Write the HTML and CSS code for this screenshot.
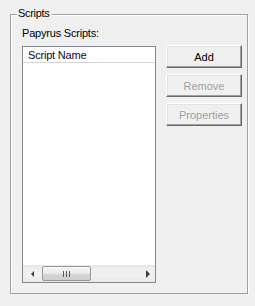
FILE: index.html
```html
<!DOCTYPE html>
<html lang="en">
<head>
    <meta charset="UTF-8">
    <title>Scripts</title>
    <link rel="stylesheet" href="styles.css">
</head>
<body>
    <div class="group">
        <span class="group-title">Scripts</span>
        <div class="left">
            <div class="label">Papyrus Scripts:</div>
            <div class="listbox">
                <div class="list-header">Script Name</div>
                <div class="list-body"></div>
                <div class="hscroll">
                    <div class="arrow"><span class="tri-left"></span></div>
                    <div class="track">
                        <div class="thumb"><span class="grip"></span></div>
                    </div>
                    <div class="arrow"><span class="tri-right"></span></div>
                </div>
            </div>
        </div>
        <div class="buttons">
            <button class="btn">Add</button>
            <button class="btn" disabled>Remove</button>
            <button class="btn" disabled>Properties</button>
        </div>
    </div>
</body>
</html>
```

FILE: styles.css
```css
body {
    margin: 0;
    background: #f0f0f0;
    font-family: "Liberation Sans", Arial, sans-serif;
    font-size: 11px;
    line-height: 13px;
    color: #000;
}
.group {
    position: relative;
    display: flex;
    box-sizing: border-box;
    margin: 14px 0 0 10px;
    width: 238px;
    height: 280px;
    padding: 12px 0 0 11px;
    border: 1px solid #a0a0a0;
    box-shadow: 1px 1px 0 #fff, inset 1px 1px 0 #fff;
}
.group-title {
    position: absolute;
    top: -8px;
    left: 6px;
    padding: 0 2px 0 1px;
    background: #f0f0f0;
    letter-spacing: -0.3px;
}
.left {
    display: flex;
    flex-direction: column;
}
.label {
    margin-bottom: 6px;
    letter-spacing: -0.2px;
}
.listbox {
    display: flex;
    flex-direction: column;
    box-sizing: border-box;
    width: 134px;
    height: 237px;
    border: 1px solid #828790;
    background: #fff;
}
.list-header {
    padding: 2px 0 0 5px;
    height: 13px;
    border-bottom: 1px solid #d5d5d5;
    letter-spacing: -0.2px;
    color: #0a0a28;
}
.list-body {
    flex: 1;
}
.hscroll {
    display: flex;
    height: 17px;
    background: linear-gradient(#e6e6e6, #f0f0f0 30%, #f0f0f0 70%, #e8e8e8);
}
.arrow {
    width: 17px;
    display: flex;
    align-items: center;
    justify-content: center;
}
.tri-left {
    width: 0;
    height: 0;
    border-top: 3px solid transparent;
    border-bottom: 3px solid transparent;
    border-right: 3px solid #404040;
    margin-left: 1px;
}
.tri-right {
    width: 0;
    height: 0;
    border-top: 4px solid transparent;
    border-bottom: 4px solid transparent;
    border-left: 4px solid #404040;
    margin-left: 2px;
}
.track {
    flex: 1;
    padding: 1px 2px 1px 2px;
    display: flex;
}
.thumb {
    box-sizing: border-box;
    width: 49px;
    height: 15px;
    border: 1px solid #979797;
    border-radius: 2px;
    background: linear-gradient(#f7f7f7, #e8e8e8 50%, #d6d6d6 51%, #cfcfcf);
    display: flex;
    align-items: center;
    justify-content: center;
}
.grip {
    width: 7px;
    height: 6px;
    background: linear-gradient(90deg, #555 1px, transparent 1px, transparent 3px, #555 3px, #555 4px, transparent 4px, transparent 6px, #555 6px);
}
.buttons {
    display: flex;
    flex-direction: column;
    gap: 6px;
    margin-left: 10px;
    padding-top: 18px;
}
.btn {
    box-sizing: border-box;
    width: 76px;
    height: 23px;
    padding: 0;
    font-family: "Liberation Sans", Arial, sans-serif;
    font-size: 11px;
    color: #000;
    background: #f0f0f0;
    border: 1px solid;
    border-color: #fff #696969 #696969 #fff;
    box-shadow: inset -1px -1px 0 #a0a0a0, inset 1px 1px 0 #e3e3e3;
    border-radius: 0;
}
.btn:disabled {
    color: #a0a0a0;
}
```
